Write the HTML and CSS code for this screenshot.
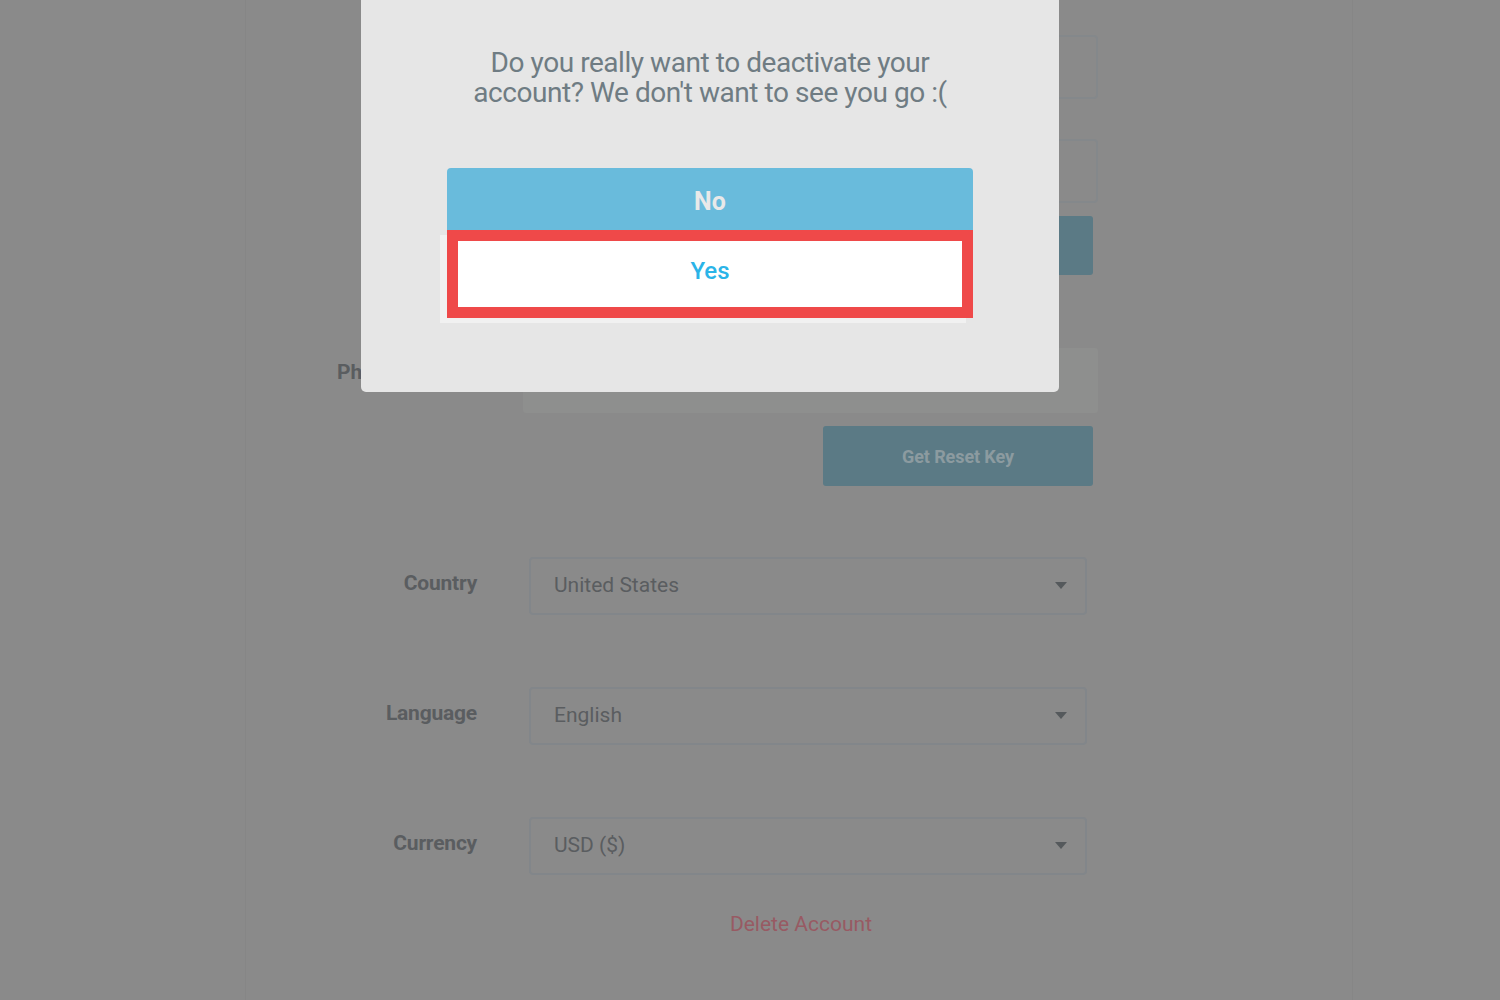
FILE: index.html
```html
<!DOCTYPE html>
<html>
<head>
<meta charset="utf-8">
<link rel="stylesheet" href="styles.css">
</head>
<body>
<div class="page">
  <div class="row-top first"><div class="input"></div></div>
  <div class="row-top second"><div class="input"></div></div>
  <div class="row-btn"><div class="btn">Verify</div></div>

  <div class="phone-row">
    <div class="plabel">Phone Number</div>
    <div class="input disabled"></div>
  </div>
  <div class="row-btn reset"><div class="btn">Get Reset Key</div></div>

  <div class="field">
    <div class="label">Country</div>
    <div class="select">United States<span class="caret"></span></div>
  </div>
  <div class="field">
    <div class="label">Language</div>
    <div class="select">English<span class="caret"></span></div>
  </div>
  <div class="field">
    <div class="label">Currency</div>
    <div class="select">USD ($)<span class="caret"></span></div>
  </div>
  <div class="delete">Delete Account</div>
</div>

<div class="modal">
  <p class="msg">Do you really want to deactivate your account? We don't want to see you go :(</p>
  <div class="actions">
    <div class="no">No</div>
    <div class="yes">Yes</div>
  </div>
</div>
</body>
</html>
```
FILE: styles.css
```css
html, body {
  margin: 0;
  padding: 0;
  background: #8a8a8a;
  font-family: Roboto, "Liberation Sans", Arial, sans-serif;
  overflow: hidden;
}
.page {
  margin-left: 245px;
  width: 1108px;
  height: 1000px;
  border-left: 1px solid #868686;
  border-right: 1px solid #868686;
  box-sizing: border-box;
  padding-top: 35px;
}
.input {
  box-sizing: border-box;
  height: 64px;
  border: 2px solid #84888b;
  border-radius: 4px;
}
.row-top {
  margin-left: 277px;
  width: 575px;
}
.row-top.second { margin-top: 40px; }
.row-btn {
  display: flex;
  justify-content: flex-end;
  width: 847px;
  margin-top: 13px;
}
.btn {
  width: 270px;
  height: 59px;
  border-radius: 3px;
  background: #5b7a85;
  color: #8c9ba0;
  font-weight: 700;
  font-size: 18px;
  display: flex;
  align-items: center;
  justify-content: center;
  letter-spacing: -0.1px;
}
.row-btn.reset { margin-top: 13px; }
.row-btn.reset .btn { height: 60px; }
.phone-row {
  display: flex;
  align-items: flex-start;
  margin-top: 73px;
}
.plabel {
  width: 232px;
  padding-left: 91px;
  padding-top: 12px;
  box-sizing: border-box;
  font-weight: 700;
  font-size: 21px;
  color: #5a5d60;
  white-space: nowrap;
  margin-right: 45px;
}
.phone-row .input {
  width: 575px;
  height: 65px;
  border: none;
  background: #8e8f8e;
  border-radius: 3px;
}
.field {
  display: flex;
  align-items: center;
  margin-top: 71px;
}
.field + .field { margin-top: 72px; }
.label {
  width: 231px;
  text-align: right;
  font-weight: 700;
  font-size: 21px;
  color: #5a5d60;
  margin-right: 52px;
  margin-bottom: 6px;
  letter-spacing: -0.2px;
}
.select {
  box-sizing: border-box;
  width: 558px;
  height: 58px;
  border: 2px solid #82868a;
  border-radius: 4px;
  padding-left: 23px;
  padding-bottom: 2px;
  display: flex;
  align-items: center;
  font-size: 21px;
  color: #5a5d60;
  position: relative;
}
.caret {
  position: absolute;
  right: 18px;
  top: 23px;
  width: 0;
  height: 0;
  border-left: 6px solid transparent;
  border-right: 6px solid transparent;
  border-top: 7px solid #55595c;
}
.delete {
  width: 1110px;
  text-align: center;
  margin-top: 37px;
  font-size: 21px;
  color: #985a63;
}
.modal {
  position: absolute;
  left: 361px;
  top: -10px;
  width: 698px;
  height: 402px;
  background: #e6e6e6;
  border-radius: 5px;
  box-sizing: border-box;
  padding-top: 58px;
}
.msg {
  margin: 0 auto;
  width: 500px;
  text-align: center;
  font-size: 28px;
  line-height: 30px;
  color: #6f7c83;
  font-weight: 400;
  letter-spacing: -0.45px;
}
.actions {
  margin: 60px 0 0 86px;
  width: 526px;
}
.no {
  height: 62px;
  box-sizing: border-box;
  padding-top: 5px;
  background: #69bbdc;
  border-radius: 4px 4px 0 0;
  color: #e9e9e9;
  font-weight: 700;
  font-size: 25px;
  display: flex;
  align-items: center;
  justify-content: center;
}
.yes {
  height: 88px;
  box-sizing: border-box;
  border: 11px solid #ef4949;
  padding-bottom: 6px;
  background: #fff;
  color: #2bb4e8;
  font-weight: 500;
  font-size: 24px;
  display: flex;
  align-items: center;
  justify-content: center;
  box-shadow: -7px 5px 0 0 #f1f1f1;
}
```
